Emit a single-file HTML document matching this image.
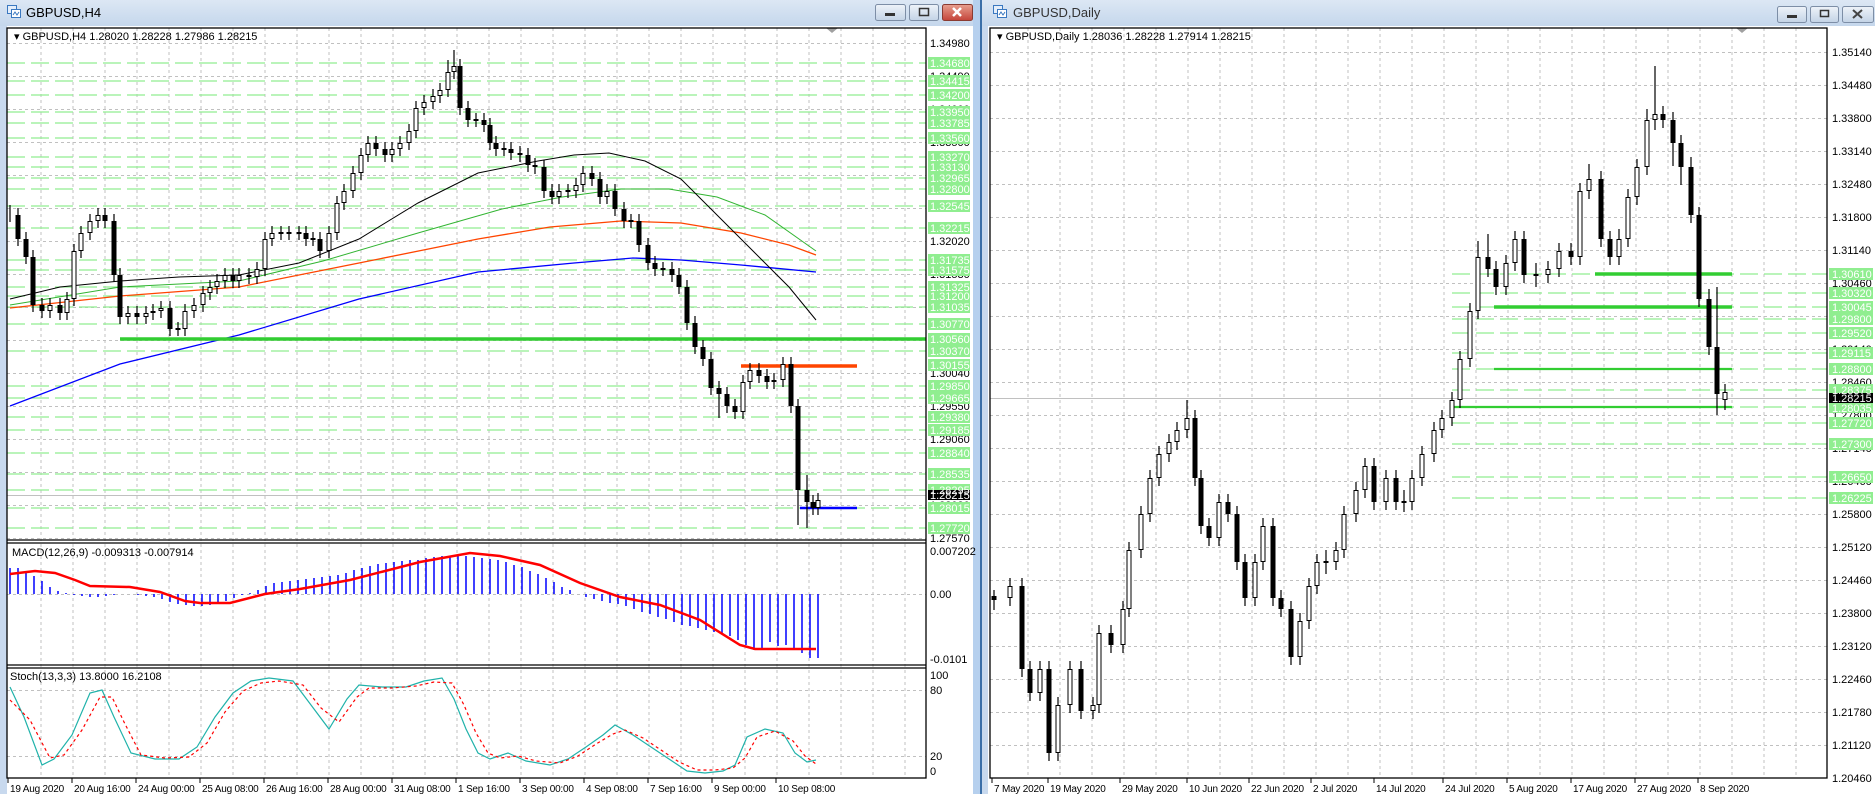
<!DOCTYPE html>
<html><head><meta charset="utf-8"><style>
html,body{margin:0;padding:0;background:#fff;}
svg{display:block;font-family:"Liberation Sans",sans-serif;}
.ax{font-size:11px;fill:#000;}
.tx{font-size:10px;fill:#000;letter-spacing:-0.2px;}
.gl{font-size:11px;fill:#fff;}
</style></head><body>
<svg width="1875" height="794" viewBox="0 0 1875 794" xmlns="http://www.w3.org/2000/svg">
<defs>
<linearGradient id="tb" x1="0" y1="0" x2="0" y2="1"><stop offset="0" stop-color="#dce7f4"/><stop offset="1" stop-color="#c5d7ec"/></linearGradient>
<linearGradient id="bt" x1="0" y1="0" x2="0" y2="1"><stop offset="0" stop-color="#eef3f9"/><stop offset="1" stop-color="#c3d3e6"/></linearGradient>
<linearGradient id="cl" x1="0" y1="0" x2="0" y2="1"><stop offset="0" stop-color="#e8a08f"/><stop offset="1" stop-color="#c4443a"/></linearGradient>
</defs>
<rect x="0" y="0" width="1875" height="794" fill="#c8d9ee"/>
<rect x="973" y="0" width="9" height="794" fill="#b6d0ee"/>
<rect x="980" y="0" width="2" height="794" fill="#3b6fa8"/>
<rect x="0" y="0" width="973" height="26" fill="url(#tb)"/>
<rect x="982" y="0" width="893" height="26" fill="url(#tb)"/>
<rect x="7" y="26" width="966" height="768" fill="#fff"/>
<rect x="988" y="26" width="887" height="768" fill="#fff"/>
<g fill="none" stroke="#3a78c0"><rect x="7.5" y="5.5" width="9" height="8" fill="#e4eefa"/><rect x="11.5" y="9.5" width="9" height="8" fill="#fff"/><path d="M13 15l2-3 2 3 2-3"/></g>
<text x="26" y="17" font-size="13" fill="#000">GBPUSD,H4</text>
<g fill="none" stroke="#3a78c0"><rect x="993.5" y="5.5" width="9" height="8" fill="#e4eefa"/><rect x="997.5" y="9.5" width="9" height="8" fill="#fff"/><path d="M999 15l2-3 2 3 2-3"/></g>
<text x="1013" y="17" font-size="13" fill="#333">GBPUSD,Daily</text>
<rect x="875.5" y="4.5" width="30" height="16" rx="2" fill="url(#bt)" stroke="#7d8ea6"/><rect x="885" y="13" width="10" height="3" fill="#333"/>
<rect x="909.5" y="4.5" width="29" height="16" rx="2" fill="url(#bt)" stroke="#7d8ea6"/><rect x="919.5" y="8.5" width="9" height="7" fill="none" stroke="#333" stroke-width="1.5"/>
<rect x="942.5" y="4.5" width="30" height="16" rx="2" fill="url(#cl)" stroke="#8a3b32"/><path d="M953 8l8 8M961 8l-8 8" stroke="#fff" stroke-width="2.5"/>
<rect x="1777.5" y="6.5" width="29" height="16" rx="2" fill="url(#bt)" stroke="#7d8ea6"/><rect x="1787" y="15" width="10" height="3" fill="#333"/>
<rect x="1810.5" y="6.5" width="28" height="16" rx="2" fill="url(#bt)" stroke="#7d8ea6"/><rect x="1820.5" y="10.5" width="8" height="6" fill="none" stroke="#333" stroke-width="1.5"/>
<rect x="1842.5" y="6.5" width="31" height="16" rx="2" fill="url(#bt)" stroke="#7d8ea6"/><path d="M1853 10l9 8M1862 10l-9 8" stroke="#444" stroke-width="2"/>

<g stroke="#c0c0c0" stroke-dasharray="3 3" fill="none">
<path d="M41 28V777M73 28V777M105 28V777M137 28V777M169 28V777M201 28V777M233 28V777M265 28V777M297 28V777M329 28V777M361 28V777M393 28V777M425 28V777M457 28V777M489 28V777M521 28V777M553 28V777M585 28V777M617 28V777M649 28V777M681 28V777M713 28V777M745 28V777M777 28V777M809 28V777M841 28V777M873 28V777M905 28V777"/>
<path d="M7 43.5H926M7 76.5H926M7 109.5H926M7 142.5H926M7 175.5H926M7 208.5H926M7 241.5H926M7 274.5H926M7 307.5H926M7 340.5H926M7 373.5H926M7 406.5H926M7 439.5H926M7 472.5H926M7 505.5H926M7 538.5H926M7 594.5H926M7 690.5H926M7 756.5H926"/>
</g>
<path d="M7 63H926M7 81H926M7 95H926M7 112H926M7 123H926M7 138H926M7 157H926M7 167H926M7 178H926M7 189H926M7 206H926M7 228H926M7 260H926M7 270H926M7 287H926M7 296H926M7 307H926M7 324H926M7 351H926M7 386H926M7 398H926M7 417H926M7 430H926M7 453H926M7 474H926M7 490H926M7 508H926M7 528H926" stroke="#90ee90" stroke-width="1.3" stroke-dasharray="18 6" fill="none"/>
<path d="M7 495.5H926" stroke="#c0c0c0"/>
<polyline fill="none" stroke="#0000ff" stroke-width="1.3" points="10,406 120,364 239,335 359,299 478,272 574,263 633,258 681,260 741,265 816,272"/>
<polyline fill="none" stroke="#ff4500" stroke-width="1.3" points="10,308 120,296 239,287 359,263 478,239 550,227 621,221 681,223 741,233 789,245 816,255"/>
<polyline fill="none" stroke="#32b432" stroke-width="1" points="10,305 120,287 239,281 323,261 418,233 502,209 562,197 621,189 669,189 717,197 765,215 816,251"/>
<polyline fill="none" stroke="#000" stroke-width="1" points="10,299 60,287 120,281 179,277 239,275 299,263 359,239 418,203 478,173 538,161 574,155 609,153 645,161 681,179 717,215 753,251 789,287 816,320"/>
<path d="M120 339H926" stroke="#32cd32" stroke-width="3.5"/>
<path d="M741 366H857" stroke="#ff4500" stroke-width="3.5"/>
<path d="M800 508H857" stroke="#0000ff" stroke-width="2.5"/>
<path fill="none" stroke="#000" stroke-width="1.2" d="M10 205V222M18 208V246M26 232V264M33 250V312M42 298V318M50 298V318M60 298V320M67 292V320M74 244V306M81 226V258M90 214V240M98 208V228M105 208V228M114 214V282M120 268V324M128 306V324M137 306V324M146 306V324M153 304V320M161 301V318M170 301V336M178 322V336M185 304V336M194 298V318M203 286V312M210 280V300M217 274V294M225 268V288M233 268V288M239 268V288M249 268V284M257 262V284M265 232V276M272 226V246M281 226V240M289 226V240M299 226V240M306 226V246M313 232V246M320 232V258M329 226V258M337 196V240M344 184V210M353 166V198M361 148V180M368 136V162M376 136V156M385 142V162M392 142V162M400 136V156M409 124V150M416 101V138M424 95V115M433 89V109M440 83V103M448 60V97M454 50V79M460 59V115M468 101V127M476 113V127M484 113V132M490 118V150M496 136V156M504 142V156M511 142V160M520 146V162M528 148V172M535 158V174M544 160V198M552 184V204M559 184V204M568 184V198M576 178V198M583 166V192M592 166V186M600 172V204M607 184V204M615 184V216M624 202V228M631 214V228M639 214V252M648 238V270M655 256V276M663 262V276M672 262V282M679 268V294M687 280V330M695 316V354M703 340V366M711 352V395M719 381V418M727 387V413M735 399V419M743 375V419M750 363V389M759 363V383M767 369V389M774 373V389M783 357V387M791 357V413M798 399V525M807 475V528M813 495V515M818 493V515"/>
<path fill="none" stroke="#000" stroke-width="5" d="M18 215V239M26 239V257M33 257V305M42 305V311M60 305V313M105 215V221M114 221V275M120 275V317M137 313V317M170 308V329M178 328V330M233 275V281M249 275V277M281 232V234M289 232V234M299 232V234M306 233V239M313 238V240M320 239V251M376 143V149M385 149V155M460 66V108M468 108V120M476 119V121M484 120V125M490 125V143M496 143V149M504 148V150M511 149V153M520 153V155M528 155V165M535 165V167M544 167V191M552 191V197M568 190V192M592 173V179M600 179V197M615 191V209M624 209V221M631 220V222M639 221V245M648 245V263M655 263V269M663 268V270M672 269V275M679 275V287M687 287V323M695 323V347M703 347V359M711 359V388M719 388V394M727 394V406M735 406V412M759 370V376M767 376V382M791 364V406M798 406V490M807 490V502M813 502V508"/>
<path fill="none" stroke="#000" stroke-width="5" d="M50 305V311M67 299V313M74 251V299M81 233V251M90 221V233M98 215V221M128 313V317M146 313V317M153 311V313M161 308V311M185 311V329M194 305V311M203 293V305M210 287V293M217 281V287M225 275V281M239 275V281M257 269V277M265 239V269M272 233V239M329 233V251M337 203V233M344 191V203M353 173V191M361 155V173M368 143V155M392 149V155M400 143V149M409 131V143M416 108V131M424 102V108M433 96V102M440 90V96M448 72V90M454 66V72M559 191V197M576 185V191M583 173V185M607 191V197M743 382V412M750 370V382M774 380V382M783 364V380M818 500V508"/>
<path fill="none" stroke="#fff" stroke-width="3" d="M50 306V310M67 300V312M74 252V298M81 234V250M90 222V232M98 216V220M128 314V316M146 314V316M161 309V310M185 312V328M194 306V310M203 294V304M210 288V292M217 282V286M225 276V280M239 276V280M257 270V276M265 240V268M272 234V238M329 234V250M337 204V232M344 192V202M353 174V190M361 156V172M368 144V154M392 150V154M400 144V148M409 132V142M416 109V130M424 103V107M433 97V101M440 91V95M448 73V89M454 67V71M559 192V196M576 186V190M583 174V184M607 192V196M743 383V411M750 371V381M783 365V379M818 501V507"/>
<path d="M826 28h12l-6 5z" fill="#a0a0a0"/>
<text x="14" y="40" font-size="11" fill="#000">▾ GBPUSD,H4  1.28020 1.28228 1.27986 1.28215</text>

<path fill="none" stroke="#0000ff" stroke-width="1.5" d="M10 594V568M18 594V568M26 594V571M34 594V576M42 594V581M50 594V587M58 594V591M66 594V593M74 594V595M82 594V596M90 594V597M98 594V597M106 594V596M114 594V595M122 594V594M138 594V595M146 594V596M154 594V597M162 594V599M170 594V602M178 594V604M186 594V605M194 594V606M202 594V606M210 594V605M218 594V603M226 594V601M234 594V598M242 594V595M250 594V593M258 594V590M266 594V586M274 594V583M282 594V582M290 594V581M298 594V580M306 594V579M314 594V578M322 594V577M330 594V576M338 594V575M346 594V573M354 594V570M362 594V568M370 594V566M378 594V564M386 594V563M394 594V562M402 594V561M410 594V560M418 594V560M426 594V558M434 594V557M442 594V556M450 594V556M458 594V555M466 594V556M474 594V557M482 594V558M490 594V559M498 594V560M506 594V562M514 594V565M522 594V567M530 594V571M538 594V574M546 594V578M554 594V582M562 594V587M570 594V590M586 594V597M594 594V599M602 594V601M610 594V603M618 594V604M626 594V606M634 594V609M642 594V612M650 594V614M658 594V617M666 594V619M674 594V622M682 594V625M690 594V626M698 594V628M706 594V630M714 594V632M722 594V633M730 594V636M738 594V640M746 594V645M754 594V650M762 594V650M770 594V642M778 594V646M786 594V645M794 594V650M802 594V653M810 594V658M818 594V658"/>
<polyline fill="none" stroke="#ff0000" stroke-width="2.5" points="10,574 35,571 55,573 75,580 90,586 130,587 160,592 185,601 200,603 230,603 265,594 300,589 350,580 420,562 470,553 500,556 540,565 580,583 620,597 660,605 700,620 740,645 755,649 816,649"/>
<text x="12" y="556" font-size="11" fill="#000">MACD(12,26,9) -0.009313 -0.007914</text>

<polyline fill="none" stroke="#20b2aa" stroke-width="1.2" points="10,687 24,717 42,765 54,759 72,735 90,693 102,690 114,717 131,753 155,759 179,759 197,747 215,717 233,693 251,681 269,678 293,681 311,705 329,729 347,699 359,685 382,687 406,687 424,681 442,678 454,699 466,729 478,753 490,759 508,753 526,761 550,765 568,759 586,747 603,735 615,725 633,735 651,747 669,759 687,771 705,773 723,771 735,765 747,737 765,729 783,733 795,753 807,762 816,760"/>
<polyline fill="none" stroke="#ff0000" stroke-width="1.2" stroke-dasharray="3 3" points="10,700 30,720 50,758 64,755 82,730 100,697 112,697 124,722 141,755 165,758 189,757 207,743 225,712 243,691 261,683 279,681 303,685 321,708 339,722 357,697 369,688 392,688 416,686 434,682 452,683 464,705 476,733 488,753 500,758 518,756 536,761 560,763 578,756 596,744 613,734 625,730 643,738 661,750 679,762 697,770 715,770 733,768 745,758 757,737 775,731 793,741 805,756 816,764"/>
<text x="10" y="680" font-size="11" fill="#000">Stoch(13,3,3) 13.8000 16.2108</text>

<g fill="none" stroke="#000" stroke-width="1.3">
<rect x="7" y="28" width="919" height="750"/>
<path d="M7 540H926M7 543H926M7 665H926M7 668H926"/>
</g>
<g class="ax">
<text x="930" y="47">1.34980</text><text x="930" y="80">1.34490</text><text x="930" y="113">1.34000</text><text x="930" y="146">1.33500</text><text x="930" y="179">1.33010</text><text x="930" y="212">1.32510</text><text x="930" y="245">1.32020</text><text x="930" y="278">1.31530</text><text x="930" y="311">1.31040</text><text x="930" y="344">1.30540</text><text x="930" y="377">1.30040</text><text x="930" y="410">1.29550</text><text x="930" y="443">1.29060</text><text x="930" y="476">1.28570</text><text x="930" y="509">1.28080</text><text x="930" y="542">1.27570</text>
<text x="930" y="555">0.007202</text><text x="930" y="598">0.00</text><text x="930" y="663">-0.0101</text>
<text x="930" y="679">100</text><text x="930" y="694">80</text><text x="930" y="760">20</text><text x="930" y="775">0</text>
</g>
<g fill="#90ee90">
<rect x="928" y="57" width="42" height="12"/><rect x="928" y="75" width="42" height="12"/><rect x="928" y="89" width="42" height="12"/><rect x="928" y="106" width="42" height="12"/><rect x="928" y="117" width="42" height="12"/><rect x="928" y="132" width="42" height="12"/><rect x="928" y="151" width="42" height="12"/><rect x="928" y="161" width="42" height="12"/><rect x="928" y="172" width="42" height="12"/><rect x="928" y="183" width="42" height="12"/><rect x="928" y="200" width="42" height="12"/><rect x="928" y="222" width="42" height="12"/><rect x="928" y="254" width="42" height="12"/><rect x="928" y="264" width="42" height="12"/><rect x="928" y="281" width="42" height="12"/><rect x="928" y="290" width="42" height="12"/><rect x="928" y="301" width="42" height="12"/><rect x="928" y="318" width="42" height="12"/><rect x="928" y="333" width="42" height="12"/><rect x="928" y="345" width="42" height="12"/><rect x="928" y="359" width="42" height="12"/><rect x="928" y="380" width="42" height="12"/><rect x="928" y="392" width="42" height="12"/><rect x="928" y="411" width="42" height="12"/><rect x="928" y="424" width="42" height="12"/><rect x="928" y="447" width="42" height="12"/><rect x="928" y="468" width="42" height="12"/><rect x="928" y="484" width="42" height="12"/><rect x="928" y="502" width="42" height="12"/><rect x="928" y="522" width="42" height="12"/>
</g>
<rect x="928" y="490" width="42" height="10" fill="#000"/>
<text x="930" y="499" font-size="11" fill="#fff">1.28215</text>
<g class="gl">
<text x="930" y="67">1.34680</text><text x="930" y="85">1.34415</text><text x="930" y="99">1.34200</text><text x="930" y="116">1.33950</text><text x="930" y="127">1.33785</text><text x="930" y="142">1.33560</text><text x="930" y="161">1.33270</text><text x="930" y="171">1.33130</text><text x="930" y="182">1.32965</text><text x="930" y="193">1.32800</text><text x="930" y="210">1.32545</text><text x="930" y="232">1.32215</text><text x="930" y="264">1.31735</text><text x="930" y="274">1.31575</text><text x="930" y="291">1.31325</text><text x="930" y="300">1.31200</text><text x="930" y="311">1.31035</text><text x="930" y="328">1.30770</text><text x="930" y="343">1.30560</text><text x="930" y="355">1.30370</text><text x="930" y="369">1.30155</text><text x="930" y="390">1.29850</text><text x="930" y="402">1.29665</text><text x="930" y="421">1.29380</text><text x="930" y="434">1.29185</text><text x="930" y="457">1.28840</text><text x="930" y="478">1.28535</text><text x="930" y="494">1.28295</text><text x="930" y="512">1.28015</text><text x="930" y="532">1.27720</text>
</g>
<path d="M8 778v5M72 778v5M136 778v5M200 778v5M264 778v5M328 778v5M392 778v5M456 778v5M520 778v5M584 778v5M648 778v5M712 778v5M776 778v5" stroke="#000"/>
<g class="tx">
<text x="10" y="792">19 Aug 2020</text><text x="74" y="792">20 Aug 16:00</text><text x="138" y="792">24 Aug 00:00</text><text x="202" y="792">25 Aug 08:00</text><text x="266" y="792">26 Aug 16:00</text><text x="330" y="792">28 Aug 00:00</text><text x="394" y="792">31 Aug 08:00</text><text x="458" y="792">1 Sep 16:00</text><text x="522" y="792">3 Sep 00:00</text><text x="586" y="792">4 Sep 08:00</text><text x="650" y="792">7 Sep 16:00</text><text x="714" y="792">9 Sep 00:00</text><text x="778" y="792">10 Sep 08:00</text>
</g>

<g stroke="#c0c0c0" stroke-dasharray="3 3" fill="none">
<path d="M1028 28V777M1060 28V777M1092 28V777M1124 28V777M1156 28V777M1188 28V777M1220 28V777M1252 28V777M1284 28V777M1316 28V777M1348 28V777M1380 28V777M1412 28V777M1444 28V777M1476 28V777M1508 28V777M1540 28V777M1572 28V777M1604 28V777M1636 28V777M1668 28V777M1700 28V777M1732 28V777M1764 28V777M1796 28V777"/>
<path d="M990 52.5H1827M990 85.5H1827M990 118.5H1827M990 151.5H1827M990 184.5H1827M990 217.5H1827M990 250.5H1827M990 283.5H1827M990 316.5H1827M990 349.5H1827M990 382.5H1827M990 415.5H1827M990 448.5H1827M990 481.5H1827M990 514.5H1827M990 547.5H1827M990 580.5H1827M990 613.5H1827M990 646.5H1827M990 679.5H1827M990 712.5H1827M990 745.5H1827"/>
</g>
<path d="M1452 274H1827M1452 293H1827M1452 307H1827M1452 319H1827M1452 333H1827M1452 353H1827M1452 369H1827M1452 390H1827M1452 407H1827M1452 423H1827M1452 444H1827M1452 477H1827M1452 498H1827" stroke="#90ee90" stroke-width="1.3" stroke-dasharray="18 6" fill="none"/>
<path d="M990 398.5H1827" stroke="#c0c0c0"/>
<path d="M1595 274H1732M1494 307H1732" stroke="#32cd32" stroke-width="3.5"/>
<path d="M1494 369H1732M1452 407H1732" stroke="#32cd32" stroke-width="2.2"/>
<path fill="none" stroke="#000" stroke-width="1.2" d="M994 590V610M1010 578V606M1022 578V677M1030 661V701M1040 661V701M1049 661V761M1058 697V761M1070 661V713M1081 661V719M1093 697V719M1099 625V713M1111 625V653M1123 601V653M1129 542V617M1141 506V558M1150 470V522M1159 446V486M1169 434V462M1177 422V450M1187 400V438M1195 410V486M1201 470V534M1209 518V546M1219 494V546M1228 494V522M1237 506V570M1245 554V606M1255 554V606M1263 518V570M1273 518V606M1281 590V617M1291 601V665M1300 613V665M1309 578V629M1317 554V594M1326 550V574M1336 542V570M1344 506V558M1356 482V522M1365 458V498M1374 458V510M1386 470V510M1396 470V510M1404 490V512M1412 470V510M1422 446V486M1434 422V462M1442 410V438M1452 392V426M1460 351V408M1470 303V367M1478 241V319M1488 234V277M1496 261V295M1506 255V295M1515 231V271M1524 231V283M1536 263V287M1548 261V283M1559 243V277M1571 243V265M1580 183V265M1589 164V199M1601 171V247M1610 231V265M1619 229V265M1628 189V247M1637 159V205M1647 109V175M1655 66V130M1663 106V128M1673 112V166M1681 135V185M1691 157V223M1699 207V307M1709 289V355M1717 287V415M1725 384V410"/>
<path fill="none" stroke="#000" stroke-width="5" d="M994 596V600M1022 586V669M1030 669V693M1049 669V753M1081 669V711M1111 633V645M1195 418V478M1201 478V526M1209 526V538M1228 502V514M1237 514V562M1245 562V598M1273 526V598M1281 598V609M1291 609V657M1326 561V563M1374 466V502M1396 478V502M1404 501V503M1488 257V269M1496 269V287M1524 239V275M1536 274V276M1571 251V257M1601 179V239M1610 239V257M1663 114V120M1673 120V143M1681 143V167M1691 167V215M1699 215V299M1709 299V347M1717 347V394"/>
<path fill="none" stroke="#000" stroke-width="5" d="M1010 586V598M1040 669V693M1058 705V753M1070 669V705M1093 705V711M1099 633V705M1123 609V645M1129 550V609M1141 514V550M1150 478V514M1159 454V478M1169 442V454M1177 430V442M1187 418V430M1219 502V538M1255 562V598M1263 526V562M1300 621V657M1309 586V621M1317 562V586M1336 550V562M1344 514V550M1356 490V514M1365 466V490M1386 478V502M1412 478V502M1422 454V478M1434 430V454M1442 418V430M1452 400V418M1460 359V400M1470 311V359M1478 257V311M1506 263V287M1515 239V263M1548 269V275M1559 251V269M1580 191V257M1589 179V191M1619 239V257M1628 197V239M1637 167V197M1647 120V167M1655 114V120M1725 392V400"/>
<path fill="none" stroke="#fff" stroke-width="3" d="M1010 587V597M1040 670V692M1058 706V752M1070 670V704M1093 706V710M1099 634V704M1123 610V644M1129 551V608M1141 515V549M1150 479V513M1159 455V477M1169 443V453M1177 431V441M1187 419V429M1219 503V537M1255 563V597M1263 527V561M1300 622V656M1309 587V620M1317 563V585M1336 551V561M1344 515V549M1356 491V513M1365 467V489M1386 479V501M1412 479V501M1422 455V477M1434 431V453M1442 419V429M1452 401V417M1460 360V399M1470 312V358M1478 258V310M1506 264V286M1515 240V262M1548 270V274M1559 252V268M1580 192V256M1589 180V190M1619 240V256M1628 198V238M1637 168V196M1647 121V166M1655 115V119M1725 393V399"/>
<path d="M1736 28h12l-6 5z" fill="#a0a0a0"/>
<text x="997" y="40" font-size="11" fill="#000">▾ GBPUSD,Daily  1.28036 1.28228 1.27914 1.28215</text>
<rect x="990" y="28" width="837" height="750" fill="none" stroke="#000" stroke-width="1.3"/>
<g class="ax">
<text x="1832" y="56">1.35140</text><text x="1832" y="89">1.34480</text><text x="1832" y="122">1.33800</text><text x="1832" y="155">1.33140</text><text x="1832" y="188">1.32480</text><text x="1832" y="221">1.31800</text><text x="1832" y="254">1.31140</text><text x="1832" y="287">1.30460</text><text x="1832" y="320">1.29800</text><text x="1832" y="353">1.29140</text><text x="1832" y="386">1.28460</text><text x="1832" y="419">1.27800</text><text x="1832" y="452">1.27140</text><text x="1832" y="485">1.26460</text><text x="1832" y="518">1.25800</text><text x="1832" y="551">1.25120</text><text x="1832" y="584">1.24460</text><text x="1832" y="617">1.23800</text><text x="1832" y="650">1.23120</text><text x="1832" y="683">1.22460</text><text x="1832" y="716">1.21780</text><text x="1832" y="749">1.21120</text><text x="1832" y="782">1.20460</text>
</g>
<g fill="#90ee90">
<rect x="1829" y="268" width="44" height="12"/><rect x="1829" y="287" width="44" height="12"/><rect x="1829" y="301" width="44" height="12"/><rect x="1829" y="313" width="44" height="12"/><rect x="1829" y="327" width="44" height="12"/><rect x="1829" y="347" width="44" height="12"/><rect x="1829" y="363" width="44" height="12"/><rect x="1829" y="384" width="44" height="12"/><rect x="1829" y="401" width="44" height="12"/><rect x="1829" y="417" width="44" height="12"/><rect x="1829" y="438" width="44" height="12"/><rect x="1829" y="471" width="44" height="12"/><rect x="1829" y="492" width="44" height="12"/>
</g>
<rect x="1829" y="393" width="44" height="10" fill="#000"/>
<text x="1832" y="402" font-size="11" fill="#fff">1.28215</text>
<g class="gl">
<text x="1832" y="278">1.30610</text><text x="1832" y="297">1.30320</text><text x="1832" y="311">1.30045</text><text x="1832" y="323">1.29800</text><text x="1832" y="337">1.29520</text><text x="1832" y="357">1.29115</text><text x="1832" y="373">1.28800</text><text x="1832" y="394">1.28375</text><text x="1832" y="412">1.28035</text><text x="1832" y="427">1.27720</text><text x="1832" y="448">1.27300</text><text x="1832" y="481">1.26650</text><text x="1832" y="502">1.26225</text>
</g>
<path d="M992 778v5M1048 778v5M1120 778v5M1187 778v5M1249 778v5M1311 778v5M1374 778v5M1443 778v5M1507 778v5M1571 778v5M1635 778v5M1698 778v5" stroke="#000"/>
<g class="tx">
<text x="994" y="792">7 May 2020</text><text x="1050" y="792">19 May 2020</text><text x="1122" y="792">29 May 2020</text><text x="1189" y="792">10 Jun 2020</text><text x="1251" y="792">22 Jun 2020</text><text x="1313" y="792">2 Jul 2020</text><text x="1376" y="792">14 Jul 2020</text><text x="1445" y="792">24 Jul 2020</text><text x="1509" y="792">5 Aug 2020</text><text x="1573" y="792">17 Aug 2020</text><text x="1637" y="792">27 Aug 2020</text><text x="1700" y="792">8 Sep 2020</text>
</g>
</svg>
</body></html>
